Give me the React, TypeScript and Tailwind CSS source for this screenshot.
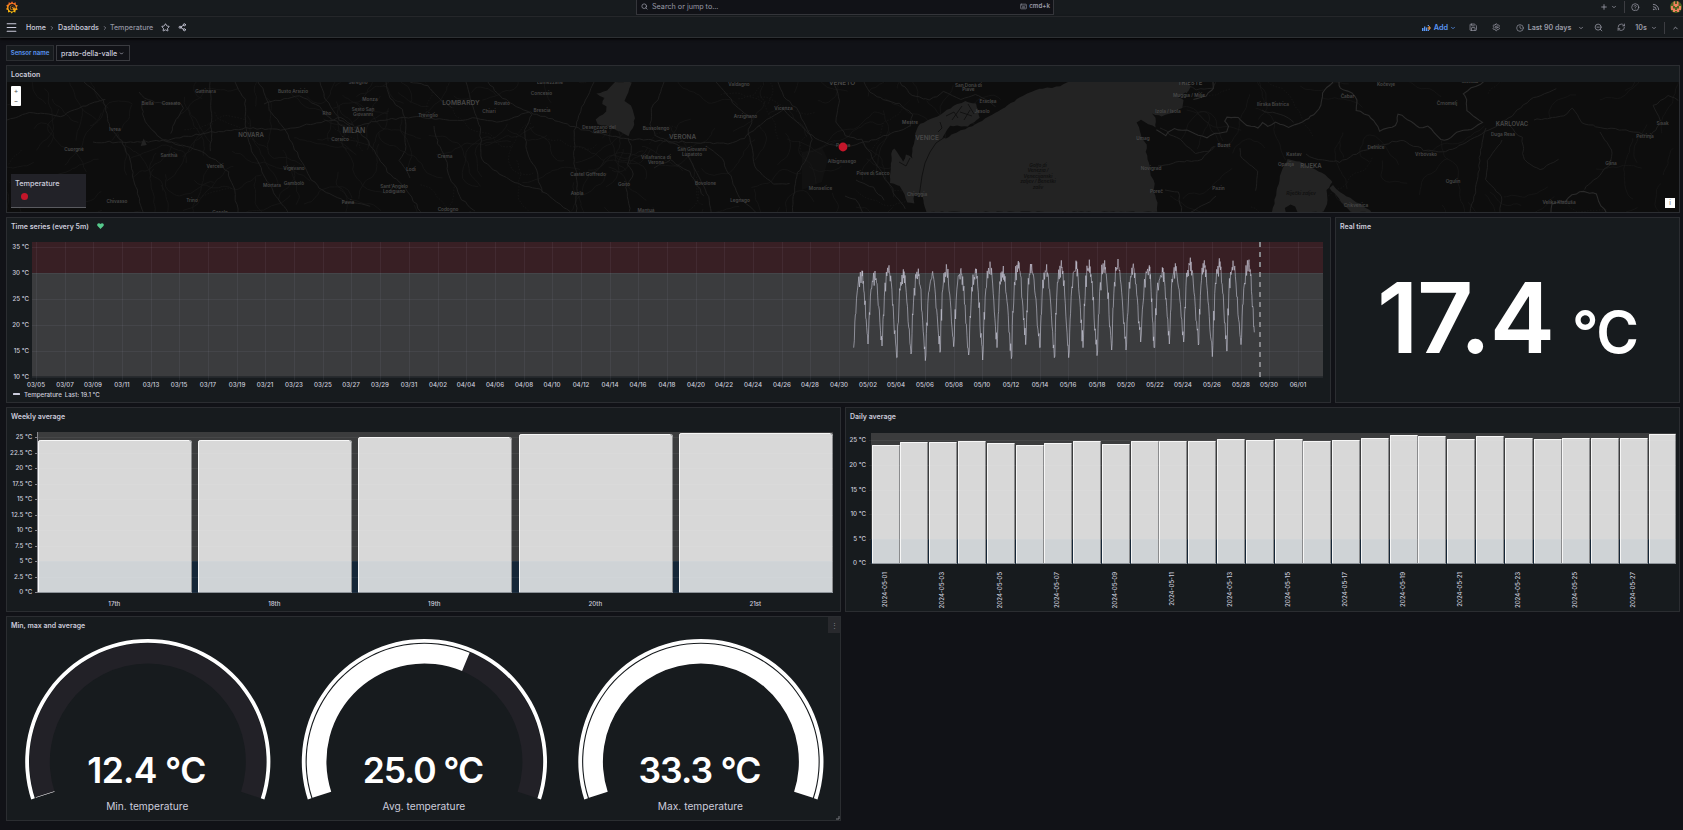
import React from "react";
import {
  Search,
  Star,
  Share2,
  ChevronDown,
  ChevronUp,
  ChevronRight,
  Plus,
  CircleHelp,
  Rss,
  Save,
  Settings,
  Clock,
  ZoomOut,
  RefreshCw,
  Keyboard,
  Menu,
} from "lucide-react";

function makeRandom(seed: number) {
  let s = seed;
  return () => {
    s = (s * 1664525 + 1013904223) % 4294967296;
    return s / 4294967296;
  };
}

/* ---------- Panel shell ---------- */

function Panel({
  title,
  className,
  extra,
  children,
}: {
  title: string;
  className: string;
  extra?: React.ReactNode;
  children: React.ReactNode;
}) {
  return (
    <section className={`relative flex flex-col border border-[#2b2d31] bg-[#171b1e] ${className}`}>
      <header className="flex h-4 shrink-0 items-center gap-2 pl-1 pt-px text-[7px] font-semibold text-[#ccccdc]">
        <h2>{title}</h2>
        {extra}
      </header>
      {children}
    </section>
  );
}

/* ---------- Map ---------- */

type Place = [string, number, number, number?];

const places: Place[] = [
  ["Gattinara", 205.5, 91], ["Busto Arsizio", 293, 91.5], ["Seregno", 358, 82], ["Monza", 370, 99],
  ["Sesto San", 363, 109], ["Giovanni", 363, 114], ["Rho", 327, 113.5], ["MILAN", 354, 130, 7],
  ["Corsico", 340, 139], ["NOVARA", 251, 135, 6], ["Biella", 147.5, 103.5], ["Cossato", 171, 103],
  ["Ivrea", 115, 129], ["Cuorgnè", 74, 149.5], ["Santhià", 169, 155.5], ["Vercelli", 215, 166],
  ["Vigevano", 294, 168], ["Mortara", 272, 185], ["Gambolò", 294, 183.5], ["Sant'Angelo", 394, 186.5],
  ["Lodigiano", 394, 191.5], ["Lodi", 411, 169], ["Pavia", 348, 202], ["Trino", 192, 200],
  ["Chivasso", 117, 201], ["Casale", 220, 212], ["LOMBARDY", 461, 102.8, 6.6], ["Rovato", 502, 103.5],
  ["Chiari", 489, 111.5], ["Treviglio", 428, 115], ["Concesio", 541.5, 93.5], ["Lumezzane", 550, 82.3],
  ["Brescia", 542, 110.5], ["Desenzano del", 599, 126.8], ["Garda", 600, 131.3], ["Bussolengo", 656, 127.8],
  ["VERONA", 682.5, 137, 6.4], ["San Giovanni", 692, 149.5], ["Lupatoto", 692, 154], ["Villafranca di", 656, 157],
  ["Verona", 656, 162], ["Castel Goffredo", 588, 174], ["Goito", 624, 184.5], ["Asola", 577, 193],
  ["Codogno", 448, 209], ["Crema", 445, 156.5], ["Mantua", 646, 210], ["Legnago", 740, 200.5],
  ["Bovolone", 705.5, 183.5], ["Arzignano", 745.5, 116], ["Valdagno", 739, 84.5], ["Vicenza", 783.5, 108.3],
  ["Monselice", 820.5, 188], ["Albignasego", 842, 160.8], ["Padua", 843, 145], ["VENETO", 842, 83, 6.4],
  ["San Donà di", 968.5, 85], ["Piave", 968.5, 89.5], ["Eraclea", 988, 101], ["Jesolo", 982, 111],
  ["Mestre", 910, 122.5], ["VENICE", 927, 137.3, 6.4], ["Piove di Sacco", 873, 173.5], ["Chioggia", 917, 194],
  ["TRIESTE", 1190, 83, 6], ["Muggia / Milje", 1189, 95.7], ["Izola / Isola", 1168, 111], ["Umag", 1143, 138.5],
  ["Novigrad", 1151, 168.7], ["Poreč", 1156.5, 191.7], ["Buzet", 1224, 144.8], ["Pazin", 1218.5, 188.4],
  ["Kočevje", 1386, 84.5], ["Ilirska Bistrica", 1273, 104.5], ["Čabar", 1347.5, 96.3], ["Črnomelj", 1447, 103.3],
  ["Metlika", 1470, 81.5], ["KARLOVAC", 1512, 123.8, 6], ["Duga Resa", 1503, 134.5], ["Delnice", 1376, 147],
  ["Vrbovsko", 1426, 153.8], ["Kastav", 1294, 153.8], ["Opatija", 1286, 164.3], ["RIJEKA", 1311, 165.7, 6],
  ["Ogulin", 1453, 181.6], ["Glina", 1611, 163], ["Petrinja", 1645, 136.5], ["Sisak", 1662.5, 123.7],
  ["Velika Kladuša", 1559, 202.6], ["Crikvenica", 1356, 205.4],
];

const majorRoads = [
  "M7 120 L30 112 L60 116 L90 104 L105 99",
  "M84 82 L95 90 L103 100 L108 118 L110 128 L122 141 L130 160 L134 180 L139 198 L143 212",
  "M139 92 L148 100 L160 103 L180 104 L183 108 L176 120 L170 134",
  "M142 104 L143 118 L152 130 L164 140 L183 146 L197 150 L216 160 L228 172 L234 190 L238 212",
  "M93 142 L130 142 L160 141 L200 134 L246 128 L284 130 L310 124 L340 118 L354 126",
  "M210 82 L211 110 L211 152 M235 82 L245 100 L246 128 L252 150 L262 172 L276 196 L288 212",
  "M258 82 L266 96 L270 110 L284 128 L292 142 L300 160 L312 180 L322 190 L345 202 L370 206",
  "M264 104 L280 100 L300 96 L316 104 L330 118 L346 128",
  "M320 82 L326 100 L340 120 L352 128 L366 138 L376 154 L388 172 L400 182 L410 194 L420 212",
  "M386 82 L390 98 L402 110 L406 126 L405 150 L400 160 L410 178",
  "M354 128 L372 122 L392 119 L420 117 L450 121 L476 118 L500 122 L530 112 L545 117 L570 126 L600 134 L628 139 L660 141 L690 142 L728 144 L744 138 L760 124 L784 110 L790 116 L812 136 L830 145 L852 146 L880 138 L910 126",
  "M410 82 L428 86 L440 100 L452 108 M466 82 L470 98 L474 110 L480 128 L482 160 L500 174 L518 184 L540 190 L560 204 L570 212",
  "M434 126 L438 144 L446 158 L448 176 L456 188 L462 200 L476 212",
  "M488 82 L500 96 L520 108 L532 114 L525 130 L526 150 L536 170 L542 192",
  "M594 82 L586 100 L580 112 L575 130 L574 160 L577 180 L576 212",
  "M664 82 L660 96 L652 108 L650 124 L656 136 L670 142 L684 148 L690 160 L698 176 L706 190 L712 212",
  "M628 138 L632 150 L628 164 L634 174 L626 188 L630 212",
  "M716 82 L728 96 L738 108 L752 118 L748 134 L752 150 L756 170 L774 184 L790 184",
  "M778 82 L784 96 L796 108 L804 122 L812 140 L806 160 L796 176 L792 212",
  "M706 146 L722 158 L732 180 L740 198 L756 212 M654 168 L670 160 L690 172 L704 196",
  "M834 82 L840 100 L836 122 L846 136 L862 140 L874 160 L884 176 L896 196 L906 208",
  "M864 82 L870 92 L880 98 L900 104 L912 114 L910 126 M900 82 L912 96 L930 100 L944 92 L960 100 L976 94 L996 106",
  "M856 180 L874 188 L884 200 M845 196 L856 200 L862 212",
  "M1180 82 L1196 90 L1212 88 L1216 82 M1160 128 L1180 140 L1196 154 L1212 150 L1216 146",
  "M1158 166 L1180 162 L1202 160 L1214 146 M1240 148 L1240 156 L1258 172 L1256 190",
  "M1216 196 L1206 204 L1190 212 M1165 190 L1178 192 L1182 212",
  "M1306 154 L1318 160 L1340 162 L1360 152 L1376 146 L1400 140 L1424 150 L1446 152 L1470 140 L1496 126 L1512 116 L1530 100 L1556 88",
  "M1262 110 L1284 116 L1294 122 M1486 128 L1480 150 L1478 180 L1470 212",
  "M1510 126 L1522 138 L1524 160 L1540 170 L1558 160 M1502 140 L1488 160 L1486 180 L1502 196 L1500 212",
  "M1534 120 L1548 118 L1564 116 L1572 108 L1582 122 L1600 128 L1626 130 L1650 136 L1660 124",
  "M1600 132 L1612 150 L1610 164 L1594 180 L1584 190 M1660 120 L1654 106 L1668 96 L1679 100",
];

const borders = [
  "M1333 82 L1322 93 L1321 105 L1317 112 L1305 120 L1288 127 L1275 122 L1268 127 L1263 123 L1258 128 L1247 125 L1238 118 L1227 117 L1224 121 L1229 127 L1227 132 L1215 133 L1207 138 L1195 134 L1190 131 L1175 129 L1165 135 L1157 129",
  "M1339 82 L1340 88 L1352 93 L1357 100 L1356 110 L1368 115 L1376 123 L1380 131 L1396 126 L1398 114 L1408 120 L1420 128 L1428 126 L1440 139 L1448 140 L1456 132 L1472 130 L1482 123 L1475 118 L1467 110 L1466 100 L1463 93 L1475 86 L1484 82",
  "M1551 212 L1552 204 L1565 201 L1572 195 L1583 191 L1597 194 L1598 202 L1607 212",
  "M1213 82 L1214 88 L1206 96 L1194 100",
];

const sea = [
  "M1068 82 L1060 86 L1035 90 L1020 97 L1005 107 L985 119 L965 129 L952 134 L946 139 L943 137 L947 130 L950 126 L968 126 L980 118 L976 104 L965 101 L950 108 L938 116 L930 119 L920 124 L916 130 L913 148 L912 158 L906 154 L903 162 L900 156 L895 148 L892 150 L891 164 L890 183 L900 186 L904 194 L907 202 L914 203 L914 194 L922 196 L926 212 L1157 212 L1157 202 L1154 192 L1155 184 L1151 175 L1149 162 L1146 152 L1147 145 L1142 138 L1139 127 L1137 122 L1141 120 L1156 128 L1155 118 L1152 114 L1162 116 L1172 113 L1182 108 L1184 100 L1178 97 L1188 92 L1191 86 L1184 82 Z",
  "M615 82 L632 82 L628 92 L625 101 L631 106 L635 118 L633 128 L628 136 L620 132 L610 127 L597 124 L596 119 L606 112 L607 107 L602 104 L604 98 L596 94 L607 90 Z",
  "M1272 212 L1276 195 L1281 172 L1288 159 L1300 162 L1312 168 L1325 175 L1333 182 L1327 190 L1328 200 L1324 212 L1297 212 L1295 207 L1290 205 L1285 208 L1286 212 Z",
  "M1333 185 L1340 192 L1350 198 L1372 212 L1350 212 L1342 202 L1330 188 Z",
  "M142 142 L144 138 L147 145 L141 146 Z",
];

const coastDetail =
  "M945 137 L936 143 L930 152 L925 163 L922 176 L920 190 L919 196 M940 122 L942 128 L938 132 M960 112 L972 116 M952 120 L962 106 M968 104 L974 114 M899 162 L906 166 L910 158 M946 116 L954 112 L958 118 M964 120 L970 110";

function buildMinorRoads() {
  const rnd = makeRandom(17);
  const out: string[] = [];
  for (let i = 0; i < 210; i++) {
    let x = i < 165 ? 7 + rnd() * 940 : 1150 + rnd() * 529;
    let y = 82 + rnd() * 130;
    let a = rnd() * Math.PI * 2;
    let d = `M${x.toFixed(1)} ${y.toFixed(1)}`;
    const n = 8 + Math.floor(rnd() * 14);
    for (let k = 0; k < n; k++) {
      a += (rnd() - 0.5) * 1.1;
      const l = 2 + rnd() * 4;
      x += Math.cos(a) * l;
      y += Math.sin(a) * l;
      d += `L${x.toFixed(1)} ${y.toFixed(1)}`;
    }
    out.push(d);
  }
  return out;
}

const roughen = (d: string, seed: number, amp: number) => {
  const rnd = makeRandom(seed);
  return d
    .split("M")
    .filter(Boolean)
    .map((part) => {
      const pts = part.trim().split("L").map((p) => p.trim().split(" ").map(Number));
      let s = `M${pts[0][0]} ${pts[0][1]}`;
      for (let i = 1; i < pts.length; i++) {
        const [ax, ay] = pts[i - 1];
        const [bx, by] = pts[i];
        const n = Math.max(1, Math.round(Math.hypot(bx - ax, by - ay) / 4));
        for (let k = 1; k <= n; k++) {
          const t = k / n;
          s += `L${(ax + (bx - ax) * t + (rnd() - 0.5) * amp).toFixed(1)} ${(ay + (by - ay) * t + (rnd() - 0.5) * amp).toFixed(1)}`;
        }
      }
      return s;
    })
    .join("");
};

const minorRoads = buildMinorRoads();
const gulfLines = ["Golfo di", "Venezia /", "Venecijanski", "zaljev / Beneški", "zaliv"];

function GeoMap() {
  return (
    <div className="relative h-[130px] overflow-hidden bg-[#0d0d0d]">
      <svg className="block" width="1672" height="130" viewBox="7 82 1672 130" fontFamily="Inter, sans-serif">
        <path d="M802 152 L822 147 L828 160 L822 182 L802 190 Z" fill="#111" />
        <g fill="none" stroke="#191919" strokeWidth="0.7">
          {minorRoads.map((d, i) => (
            <path key={i} d={d} strokeDasharray={i % 7 === 0 ? "1.5 1.5" : undefined} />
          ))}
        </g>
        <g fill="none" stroke="#202020" strokeWidth="0.9">
          {majorRoads.map((d, i) => (
            <path key={i} d={roughen(d, i + 3, 1.8)} />
          ))}
        </g>
        <g fill="none" stroke="#2b2b2b" strokeWidth="1.1">
          {borders.map((d, i) => (
            <path key={i} d={roughen(d, i + 50, 1.6)} />
          ))}
        </g>
        <g fill="#232323">
          {sea.map((d, i) => (
            <path key={i} d={roughen(d.replace(" Z", ""), i + 80, 1.2) + "Z"} />
          ))}
        </g>
        <path d={coastDetail} fill="none" stroke="#101010" strokeWidth="0.9" />
        <g textAnchor="middle" fill="#484848">
          {places.map(([name, x, y, size]) => (
            <text key={name + x} x={x} y={y + (size ? size * 0.36 : 1.7)} fontSize={size ?? 4.7} fontWeight={600}>
              {name}
            </text>
          ))}
        </g>
        <g textAnchor="middle" fill="#101010" fontStyle="italic" fontSize="4.7" fontWeight="600">
          {gulfLines.map((t, i) => (
            <text key={t} x="1038" y={166.5 + i * 5.5}>
              {t}
            </text>
          ))}
          <text x="1301" y="194.5">Riječki zaljev</text>
        </g>
        <circle cx="843" cy="147" r="4.4" fill="#c4162a" />
      </svg>
      <div className="absolute left-1 top-1 flex h-5 w-[10px] flex-col items-center justify-around rounded-[1px] bg-white text-[6px] font-bold leading-none text-[#777]">
        <span>+</span>
        <span>−</span>
      </div>
      <div className="absolute left-1 top-[92px] h-[34px] w-[75px] border-b border-[#5a5b60] bg-[#222228] pl-1 pt-[5px] text-[7.3px] font-medium leading-[9px] text-[#ccccdc]">
        Temperature
        <div className="ml-[6px] mt-[5px] size-[7px] rounded-full bg-[#c4162a]" />
      </div>
      <div className="absolute bottom-1 right-1 flex size-[10px] items-center justify-center bg-white text-[6px] font-bold leading-none text-[#999]">
        i
      </div>
    </div>
  );
}

/* ---------- Time series ---------- */

const troughs: [number, number][] = [
  [41, 413], [84, 402], [126, 408], [170, 443], [213, 432], [256, 452], [300, 427], [341, 410], [386, 435],
  [428, 450], [471, 413], [514, 446], [557, 404], [599, 413], [643, 443], [686, 443], [729, 413], [771, 437],
  [815, 420], [858, 420], [902, 396], [942, 413], [988, 402], [1031, 396], [1075, 405], [1117, 440],
  [1160, 423], [1203, 404], [1243, 367],
];
const crests: [number, number][] = [
  [66, 182], [105, 183], [147, 166], [190, 178], [235, 176], [278, 184], [319, 163], [363, 175], [407, 176],
  [450, 155], [490, 168], [535, 153], [575, 162], [620, 163], [664, 151], [708, 152], [748, 149], [794, 151],
  [834, 147], [880, 161], [928, 166], [967, 172], [1006, 160], [1051, 143], [1093, 151], [1138, 145],
  [1179, 152], [1227, 149],
];

function buildSeries() {
  const rnd = makeRandom(99);
  const pts: [number, number][] = [];
  const rise = [
    [0, 0], [0.08, 0.06], [0.14, 0.3], [0.2, 0.44], [0.26, 0.42], [0.34, 0.62], [0.44, 0.76], [0.52, 0.74],
    [0.62, 0.9], [0.7, 0.84], [0.8, 0.95], [0.88, 0.87], [0.94, 0.92], [1, 1],
  ];
  const fall = [
    [0.05, 0.9], [0.1, 0.94], [0.16, 0.84], [0.22, 0.88], [0.3, 0.78], [0.38, 0.74], [0.46, 0.6], [0.54, 0.58],
    [0.62, 0.42], [0.7, 0.3], [0.78, 0.26], [0.86, 0.12], [0.92, 0.14], [1, 0],
  ];
  crests.forEach(([cx, cy], i) => {
    const [ax, ay] = troughs[i];
    const [bx, by] = troughs[i + 1];
    rise.forEach(([t, v], k) => {
      const j = k === 0 || k === rise.length - 1 ? 0 : (rnd() - 0.5) * 32;
      pts.push([ax + (cx - ax) * t, Math.min(Math.max(ay + (cy - ay) * v + j, cy), ay)]);
    });
    fall.forEach(([t, v], k) => {
      const j = k === fall.length - 1 ? 0 : (rnd() - 0.5) * 32;
      pts.push([cx + (bx - cx) * t, Math.min(Math.max(by + (cy - by) * v + j, cy), by)]);
    });
  });
  return "M" + pts.map(([x, y]) => `${(840 + x / 3).toFixed(2)} ${(210 + y / 3).toFixed(2)}`).join("L");
}

const seriesPath = buildSeries();

const dateTicks = Array.from({ length: 45 }, (_, i) => {
  const d = new Date(Date.UTC(2024, 2, 5 + i * 2));
  const mm = String(d.getUTCMonth() + 1).padStart(2, "0");
  const dd = String(d.getUTCDate()).padStart(2, "0");
  return { label: `${mm}/${dd}`, x: Math.round(36 + i * 28.68) + 0.5 };
});

const seriesTicks: [number, number][] = [[35, 247.5], [30, 273.5], [25, 299.5], [20, 325.5], [15, 351.5], [10, 377.5]];

function TimeSeries() {
  return (
    <svg className="block" width="1323" height="168" viewBox="7 234 1323 168" fontFamily="Inter, sans-serif" fontSize="6.2" fontWeight="500" fill="#ccccdc">
      <rect x="32" y="242" width="1291" height="31" fill="#381f24" />
      <rect x="32" y="273" width="1291" height="103.5" fill="#3b3c3e" />
      <g stroke="#ccccdc" strokeOpacity="0.07">
        {seriesTicks.map(([v, y]) => (
          <line key={v} x1="32" x2="1323" y1={y} y2={y} />
        ))}
        {dateTicks.map((t) => (
          <line key={t.label} x1={t.x} x2={t.x} y1="242" y2="380" />
        ))}
      </g>
      {seriesTicks.map(([v, y]) => (
        <text key={v} x="29" y={y + 1.5} textAnchor="end">{`${v} °C`}</text>
      ))}
      {dateTicks.map((t) => (
        <text key={t.label} x={t.x - 0.5} y="387" textAnchor="middle">
          {t.label}
        </text>
      ))}
      <path d={seriesPath} fill="none" stroke="#ccccdc" strokeOpacity="0.72" strokeWidth="0.8" />
      <line x1="1260" x2="1260" y1="242" y2="380" stroke="#85868a" strokeWidth="2" strokeDasharray="5 5" />
      <rect x="13" y="393" width="7" height="2" rx="0.5" fill="#ccccdc" />
      <text x="24" y="397">Temperature</text>
      <text x="64.8" y="397">Last: 19.1 °C</text>
    </svg>
  );
}

/* ---------- Bar charts ---------- */

function Bar({ x, top, width, bottom, split, radius }: { x: number; top: number; width: number; bottom: number; split: number; radius: number }) {
  const r = x + width;
  return (
    <g>
      <path
        d={`M${x} ${bottom}V${top + radius}Q${x} ${top} ${x + radius} ${top}H${r - radius}Q${r} ${top} ${r} ${top + radius}V${bottom}Z`}
        fill="#d8d8d8"
      />
      <rect x={x} y={split} width={width} height={bottom - split} fill="#cfd3d6" />
      <path
        d={`M${x + 0.5} ${bottom}V${top + radius}Q${x + 0.5} ${top + 0.5} ${x + radius} ${top + 0.5}H${r - radius}`}
        fill="none"
        stroke="#f6f6f6"
      />
      <path d={`M${r - radius} ${top + 0.5}Q${r - 0.5} ${top + 0.5} ${r - 0.5} ${top + radius}V${bottom}`} fill="none" stroke="#8a8b8d" />
      <line x1={x} x2={r} y1={bottom - 0.5} y2={bottom - 0.5} stroke="#878e94" />
    </g>
  );
}

const weekly = [
  { label: "17th", x: 38, top: 440 },
  { label: "18th", x: 198, top: 440 },
  { label: "19th", x: 358, top: 437 },
  { label: "20th", x: 519, top: 434 },
  { label: "21st", x: 679, top: 433 },
];
const weeklyTicks = Array.from({ length: 11 }, (_, i) => ({ v: i * 2.5, y: Math.round(592 - i * 15.5) + 0.5 }));

function WeeklyChart() {
  return (
    <svg className="block" width="833" height="187" viewBox="7 424 833 187" fontFamily="Inter, sans-serif" fontSize="6.2" fontWeight="500" fill="#ccccdc">
      <rect x="37" y="432" width="796" height="130" fill="#3b3c3d" />
      <rect x="37" y="561" width="796" height="32" fill="#152637" />
      {weekly.map((b) => (
        <g key={b.label}>
          <Bar x={b.x} top={b.top} width={154} bottom={593} split={561} radius={2.5} />
          <text x={b.x + 76.3} y="606" textAnchor="middle">
            {b.label}
          </text>
        </g>
      ))}
      {weeklyTicks.map((t) => (
        <g key={t.v}>
          <line x1="38" x2="833" y1={t.y} y2={t.y} stroke="#ffffff" strokeOpacity="0.06" />
          <line x1="35" x2="38" y1={t.y} y2={t.y} stroke="#85868d" />
          <text x="32.3" y={t.y + 1.5} textAnchor="end">{`${t.v} °C`}</text>
        </g>
      ))}
      <line x1="37.5" x2="37.5" y1="432" y2="593" stroke="#85868d" />
    </svg>
  );
}

const dailyTops = [
  445, 442, 442, 441, 443, 445, 443, 441, 444, 441, 441, 441, 439, 440, 439, 441, 440, 438, 435, 436, 439, 436, 438,
  439, 438, 438, 438, 434,
];
const dailyTicks: [number, number][] = [[25, 440.5], [20, 465.5], [15, 490.5], [10, 514.5], [5, 539.5], [0, 563.5]];

function DailyChart() {
  return (
    <svg className="block" width="833" height="187" viewBox="846 424 833 187" fontFamily="Inter, sans-serif" fontSize="6.2" fontWeight="500" fill="#ccccdc">
      <rect x="871" y="433" width="805" height="106" fill="#3b3c3d" />
      <rect x="871" y="539" width="805" height="25" fill="#152637" />
      {dailyTops.map((top, i) => {
        const x = Math.round(871.6 + i * 28.78);
        return (
          <g key={i}>
            <Bar x={x} top={top} width={i === 27 ? 27 : 28} bottom={564} split={539} radius={0.5} />
            {i % 2 === 0 && (
              <text transform={`translate(${x + 15.4} 572) rotate(-90)`} textAnchor="end" fontSize="6.1">
                {`2024-05-${String(i + 1).padStart(2, "0")}`}
              </text>
            )}
          </g>
        );
      })}
      {dailyTicks.map(([v, y]) => (
        <g key={v}>
          <line x1="869" x2="1676" y1={y} y2={y} stroke="#ffffff" strokeOpacity="0.06" />
          <text x="866" y={y + 1.5} textAnchor="end">{`${v} °C`}</text>
        </g>
      ))}
    </svg>
  );
}

/* ---------- Gauges ---------- */

function ring(cx: number, cy: number, outer: number, inner: number, from: number, to: number) {
  const p = (r: number, deg: number) => {
    const a = ((deg - 90) * Math.PI) / 180;
    return `${(cx + r * Math.cos(a)).toFixed(2)} ${(cy + r * Math.sin(a)).toFixed(2)}`;
  };
  const large = to - from > 180 ? 1 : 0;
  return `M${p(outer, from)}A${outer} ${outer} 0 ${large} 1 ${p(outer, to)}L${p(inner, to)}A${inner} ${inner} 0 ${large} 0 ${p(inner, from)}Z`;
}

const gauges = [
  { cx: 147.8, value: "12.4 °C", width: 119, label: "Min. temperature", end: -107.7 },
  { cx: 424.4, value: "25.0 °C", width: 121.5, label: "Avg. temperature", end: 22.6 },
  { cx: 700.9, value: "33.3 °C", width: 123, label: "Max. temperature", end: 108 },
];

function Gauges() {
  return (
    <svg className="block" width="833" height="187" viewBox="7 633 833 187" fontFamily="Inter, sans-serif">
      {gauges.map((g) => (
        <g key={g.label}>
          <path d={ring(g.cx, 761.5, 118.2, 98, -108, 108)} fill="#222127" />
          {g.end > -100 && <path d={ring(g.cx, 761.5, 119, 117, -108, g.end)} fill="#171b1e" />}
          <path d={ring(g.cx, 761.5, 117.7, 98, -108, g.end)} fill="#fff" />
          <path d={ring(g.cx, 761.5, 122.6, 118.8, -108, 108)} fill="#fff" />
          <text x={g.cx - 1} y="783" textAnchor="middle" fontSize="35.5" fontWeight="600" fill="#fff" textLength={g.width}>
            {g.value}
          </text>
          <text x={g.cx - 0.5} y="810" textAnchor="middle" fontSize="10.2" fill="#ccccdc">
            {g.label}
          </text>
        </g>
      ))}
      <path d="M836 819H839V816" fill="none" stroke="#77787d" />
    </svg>
  );
}

/* ---------- Header ---------- */

function GrafanaLogo() {
  return (
    <svg width="12" height="13" viewBox="0 0 24 26" className="mt-px">
      <defs>
        <linearGradient id="flame" x1="0" x2="0" y1="1" y2="0">
          <stop offset="0" stopColor="#fbca0a" />
          <stop offset="1" stopColor="#f05a28" />
        </linearGradient>
      </defs>
      <path
        d="M12 .5l2.8 4 4.6-1.8.2 4.8 4.2 1.5-2.6 4 2.3 4.2-4.3 1.3-.5 4.5-4.5-1.3L11.5 25l-2.8-3.4-4.5 1.2-.3-4.6L0 16.3l2.4-3.9L.7 8.3l4.2-1.6.5-4.4 4.2 1.6z"
        fill="url(#flame)"
      />
      <path
        d="M18.3 13.6a6 6 0 1 0-4.3 5.6M13 15.8a2.5 2.5 0 1 1 1.6-4"
        fill="none"
        stroke="#171b1e"
        strokeWidth="2.8"
        strokeLinecap="round"
      />
    </svg>
  );
}

function Avatar() {
  return (
    <svg width="12" height="12" viewBox="0 0 12 12">
      <clipPath id="avatar">
        <circle cx="6" cy="6" r="6" />
      </clipPath>
      <g clipPath="url(#avatar)">
        <rect width="12" height="12" fill="#4d6420" />
        <path d="M3.5 0h1.500v3h2V0h1.500v5H7v1H5V5H3.500zM1 5h2v2.500h2V9h2V7.500h2V5h2v4H9v2H7v-1H5v1H3V9H1z" fill="#f0805f" />
      </g>
    </svg>
  );
}

function Slot({ className, children }: { className: string; children?: React.ReactNode }) {
  return <div className={`flex shrink-0 items-center justify-center ${className}`}>{children}</div>;
}

function TopBar() {
  return (
    <div className="flex h-[17px] items-start border-b border-[#2d3033] bg-[#171b1e] text-[#9a9ba7]">
      <div className="w-[636px] pl-[6px]">
        <GrafanaLogo />
      </div>
      <div className="flex h-[15px] w-[418px] items-center border-x border-b border-[#35363b] bg-[#111217] pb-px pl-1 pr-[3px] text-[7.2px] text-[#9a9ba8]">
        <Search size={7} strokeWidth={2.5} className="mr-[4px]" />
        <span>Search or jump to...</span>
        <Keyboard size={7} className="ml-auto mr-[2px]" />
        <span className="text-[6.2px] font-semibold">cmd+k</span>
      </div>
      <div className="ml-auto flex h-[14px] items-center">
        <Slot className="w-[10px]"><Plus size={8} strokeWidth={2.5} /></Slot>
        <Slot className="w-[9px]"><ChevronDown size={6} strokeWidth={3} /></Slot>
        <Slot className="mx-[6px] h-3 w-px bg-[#3c3d42]" />
        <Slot className="w-[9px]"><CircleHelp size={8.5} /></Slot>
        <Slot className="ml-[11px] w-[10px]"><Rss size={8} strokeWidth={2.5} /></Slot>
        <Slot className="ml-[9px] mr-[1px] w-3"><Avatar /></Slot>
      </div>
    </div>
  );
}

function AddIcon() {
  return (
    <svg width="9" height="6" viewBox="0 0 9 6">
      <path d="M0 3h1.5v3H0zM2 1.5h1.3V6H2zM3.9 2.5h1.3V6H3.9zM5.7 0H7v1H5.7zM5.7 4.5H7V6H5.7z" fill="#5b98f5" />
      <path d="M6.7 1h1v1.5H9v1H7.7V5h-1V3.5H5.5v-1h1.2z" fill="#f5a04c" />
    </svg>
  );
}

function NavBar() {
  return (
    <div className="relative flex h-[21px] items-center border-b border-[#2d3033] bg-[#171b1e] pt-px text-[7.1px] font-medium text-[#ccccdc] shadow-[0_1px_3px_#000]">
      <Menu size={13} strokeWidth={2} className="ml-[5px] shrink-0" />
      <span className="ml-2">Home</span>
      <ChevronRight size={6} strokeWidth={3} className="mx-[3px] text-[#8e8f9b]" />
      <span>Dashboards</span>
      <ChevronRight size={6} strokeWidth={3} className="ml-[3px] mr-[2px] text-[#8e8f9b]" />
      <span className="text-[#9293a0]">Temperature</span>
      <Star size={9} strokeWidth={2.3} className="ml-2" />
      <Share2 size={8.5} strokeWidth={2.5} className="ml-2" />
      <div className="ml-auto flex items-center text-[#9a9ba7]">
        <Slot className="w-[9px]"><AddIcon /></Slot>
        <Slot className="ml-[3px] w-[14px] text-[7.3px] font-semibold text-[#5b98f5]">Add</Slot>
        <Slot className="ml-[2px] w-[6px] text-[#5b98f5]"><ChevronDown size={6} strokeWidth={3} /></Slot>
        <Slot className="ml-[13px] w-[9px]"><Save size={8.5} /></Slot>
        <Slot className="ml-[14px] w-[9px]"><Settings size={8.5} /></Slot>
        <Slot className="ml-[14px] w-[9px]"><Clock size={8} /></Slot>
        <Slot className="ml-1 w-[43px] whitespace-nowrap font-semibold">Last 90 days</Slot>
        <Slot className="ml-[7px] w-[6px]"><ChevronDown size={6} strokeWidth={3} /></Slot>
        <Slot className="ml-[10px] w-[9px]"><ZoomOut size={9} /></Slot>
        <Slot className="ml-[14px] w-[9px]"><RefreshCw size={8.5} /></Slot>
        <Slot className="ml-[9px] w-3 font-semibold">10s</Slot>
        <Slot className="ml-1 w-[6px]"><ChevronDown size={6} strokeWidth={3} /></Slot>
        <Slot className="mx-[7px] h-3 w-px bg-[#3c3d42]" />
        <Slot className="mr-[4px] w-[7px]"><ChevronUp size={8} strokeWidth={3} /></Slot>
      </div>
    </div>
  );
}

export default function App() {
  return (
    <main className="h-[830px] w-[1683px] overflow-hidden bg-[#111217] font-[Inter,sans-serif] leading-none">
      <TopBar />
      <NavBar />
      <div className="mt-[7px] flex h-4 gap-[2px] pl-[6px]">
        <div className="flex w-12 items-center justify-center border border-[#2b2d31] bg-[#171b1e] text-[6.1px] font-semibold text-[#5b98f5]">
          Sensor name
        </div>
        <div className="flex w-[74px] items-center border border-[#3a3b40] pl-1 pt-px text-[7.1px] font-medium text-[#ccccdc]">
          prato-della-valle
          <ChevronDown size={5} strokeWidth={3} className="ml-[2px]" />
        </div>
      </div>
      <div className="mt-1 flex w-[1680px] flex-col gap-1 pl-[6px]">
        <Panel title="Location" className="h-[148px]">
          <GeoMap />
        </Panel>
        <div className="flex gap-1">
          <Panel
            title="Time series (every 5m)"
            className="h-[186px] w-[1325px]"
            extra={
              <svg width="7" height="6" viewBox="0 0 8 7" className="-mt-px">
                <path d="M4 7L.6 3.6C-.4 2.3.3.3 2 .3c.9 0 1.6.5 2 1 .4-.5 1.1-1 2-1 1.7 0 2.4 2 1.4 3.3z" fill="#56c98c" />
              </svg>
            }
          >
            <TimeSeries />
          </Panel>
          <Panel title="Real time" className="h-[186px] w-[345px]">
            <svg className="block" width="343" height="168" viewBox="1336 234 343 168" fontFamily="Inter, sans-serif" fontWeight="600" fill="#fff">
              <text x="1377" y="353" fontSize="98" textLength="178">17.4</text>
              <text x="1572" y="353" fontSize="58" textLength="67">°C</text>
            </svg>
          </Panel>
        </div>
        <div className="flex gap-1">
          <Panel title="Weekly average" className="h-[205px] w-[835px]">
            <WeeklyChart />
          </Panel>
          <Panel title="Daily average" className="h-[205px] w-[835px]">
            <DailyChart />
          </Panel>
        </div>
        <Panel title="Min, max and average" className="h-[205px] w-[835px]">
          <Gauges />
          <div className="absolute right-0 top-0 flex h-4 w-3 items-center justify-center bg-[#28292d] text-[7px] text-[#85868d]">⋮</div>
        </Panel>
      </div>
    </main>
  );
}
